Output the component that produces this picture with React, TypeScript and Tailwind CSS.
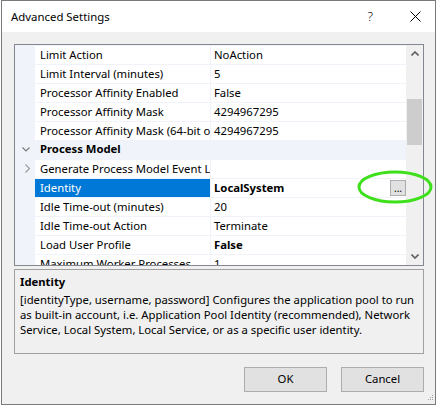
import React from 'react'

type Row =
  | { kind: 'cat'; name: string }
  | {
      kind: 'prop'
      name: string
      value: string
      bold?: boolean
      selected?: boolean
      expandable?: boolean
      button?: boolean
    }

const rows: Row[] = [
  { kind: 'prop', name: 'Limit Action', value: 'NoAction' },
  { kind: 'prop', name: 'Limit Interval (minutes)', value: '5' },
  { kind: 'prop', name: 'Processor Affinity Enabled', value: 'False' },
  { kind: 'prop', name: 'Processor Affinity Mask', value: '4294967295' },
  { kind: 'prop', name: 'Processor Affinity Mask (64-bit option)', value: '4294967295' },
  { kind: 'cat', name: 'Process Model' },
  { kind: 'prop', name: 'Generate Process Model Event Log Entry', value: '', expandable: true },
  { kind: 'prop', name: 'Identity', value: 'LocalSystem', bold: true, selected: true, button: true },
  { kind: 'prop', name: 'Idle Time-out (minutes)', value: '20' },
  { kind: 'prop', name: 'Idle Time-out Action', value: 'Terminate' },
  { kind: 'prop', name: 'Load User Profile', value: 'False', bold: true },
  { kind: 'prop', name: 'Maximum Worker Processes', value: '1' },
]

function GridRow({ row }: { row: Row }) {
  if (row.kind === 'cat') {
    return (
      <div className="flex h-[19px] shrink-0 items-center bg-[#f0f4fa]">
        <div className="flex w-[20px] justify-center pl-[1px]">
          <svg width="8" height="5" viewBox="0 0 8 5">
            <polyline points="0.5,0.5 4,4 7.5,0.5" fill="none" stroke="#7a7a7a" strokeWidth="1.2" />
          </svg>
        </div>
        <span className="pl-[5px] font-bold">{row.name}</span>
      </div>
    )
  }
  return (
    <div className="flex h-[19px] shrink-0">
      <div className="flex w-[20px] items-center justify-center bg-[#f0f4fa] pl-[4px]">
        {row.expandable && (
          <svg width="5" height="9" viewBox="0 0 5 9">
            <polyline points="0.5,0.5 4.5,4.5 0.5,8.5" fill="none" stroke="#9a9a9a" strokeWidth="1.2" />
          </svg>
        )}
      </div>
      <div className="flex w-[175px] flex-col">
        <div className="h-[1px] bg-[#f0f4fa]" />
        <div
          className={
            'flex flex-1 items-center overflow-hidden whitespace-nowrap pl-[5px] ' +
            (row.selected ? 'bg-[#0078d7] text-white' : '')
          }
        >
          {row.name}
        </div>
      </div>
      <div className="w-[1px] bg-[#f0f4fa]" />
      <div className="flex flex-1 flex-col">
        <div className="h-[1px] bg-[#f0f4fa]" />
        <div className="flex flex-1 items-center whitespace-nowrap pl-[3px]">
          <span className={row.bold ? 'font-bold' : ''}>{row.value}</span>
          {row.button && (
            <div className="ml-auto flex h-[16px] w-[16px] items-end justify-center border border-[#adadad] bg-[#e1e1e1] pb-[2px] text-[10px] leading-none">
              ...
            </div>
          )}
        </div>
      </div>
    </div>
  )
}

export default function App() {
  return (
    <div className="relative h-[407px] w-[438px] bg-white font-['Noto_Sans',sans-serif] text-[11.3px] text-black">
      <div className="ml-[1px] flex h-[405px] w-[435px] flex-col border border-[#7a7a7a] bg-[#f0f0f0]">
        {/* title bar */}
        <div className="flex h-[31px] shrink-0 items-center bg-white pl-[9px]">
          <span className="text-[11.4px]">Advanced Settings</span>
          <span className="ml-auto text-[13px] font-light">?</span>
          <svg className="ml-[37px] mr-[14px]" width="11" height="11" viewBox="0 0 11 11">
            <path d="M0.5 0.5 L10.5 10.5 M10.5 0.5 L0.5 10.5" stroke="#000" strokeWidth="1" />
          </svg>
        </div>

        <div className="flex flex-1 flex-col pl-[12px] pr-[11px] pt-[12px]">
          {/* property grid */}
          <div className="flex h-[222px] border border-[#828790] bg-white">
            <div className="flex flex-1 flex-col overflow-hidden">
              {rows.map((r, i) => (
                <GridRow key={i} row={r} />
              ))}
            </div>
            <div className="flex w-[17px] flex-col bg-[#f0f0f0]">
              <div className="flex h-[17px] items-center justify-center">
                <svg width="8" height="5" viewBox="0 0 8 5">
                  <polyline points="0.5,4.5 4,1 7.5,4.5" fill="none" stroke="#606060" strokeWidth="1.6" />
                </svg>
              </div>
              <div className="mx-[1px] mt-[37px] h-[46px] bg-[#cdcdcd]" />
              <div className="flex-1" />
              <div className="flex h-[17px] items-center justify-center">
                <svg width="8" height="5" viewBox="0 0 8 5">
                  <polyline points="0.5,0.5 4,4 7.5,0.5" fill="none" stroke="#606060" strokeWidth="1.6" />
                </svg>
              </div>
            </div>
          </div>

          {/* description */}
          <div className="mt-[3px] h-[85px] border border-[#a0a0a0] px-[5px] pt-[4px]">
            <div className="font-bold leading-[16px]">Identity</div>
            <div className="mt-[2px] whitespace-nowrap leading-[15px]">
              [identityType, username, password] Configures the application pool to run
              <br />
              as built-in account, i.e. Application Pool Identity (recommended), Network
              <br />
              Service, Local System, Local Service, or as a specific user identity.
            </div>
          </div>

          {/* buttons */}
          <div className="mt-[13px] flex justify-end gap-[14px]">
            <button className="h-[25px] w-[83px] border border-[#adadad] bg-[#e1e1e1]">OK</button>
            <button className="h-[25px] w-[83px] border border-[#adadad] bg-[#e1e1e1]">Cancel</button>
          </div>
        </div>
      </div>

      {/* resize grip */}
      <svg className="absolute left-[427px] top-[395px]" width="7" height="7" viewBox="0 0 7 7">
        <rect x="5" y="0" width="1" height="1" fill="#a0a0a0" />
        <rect x="3" y="2" width="1" height="1" fill="#a0a0a0" />
        <rect x="5" y="2" width="1" height="1" fill="#a0a0a0" />
        <rect x="1" y="4" width="1" height="1" fill="#a0a0a0" />
        <rect x="3" y="4" width="1" height="1" fill="#a0a0a0" />
        <rect x="5" y="4" width="1" height="1" fill="#a0a0a0" />
      </svg>

      {/* green annotation ellipse */}
      <svg className="absolute left-[356px] top-[169px]" width="80" height="36" viewBox="0 0 80 36">
        <ellipse cx="39" cy="18" rx="36" ry="15" fill="none" stroke="#3ee01c" strokeWidth="3" />
      </svg>
    </div>
  )
}
